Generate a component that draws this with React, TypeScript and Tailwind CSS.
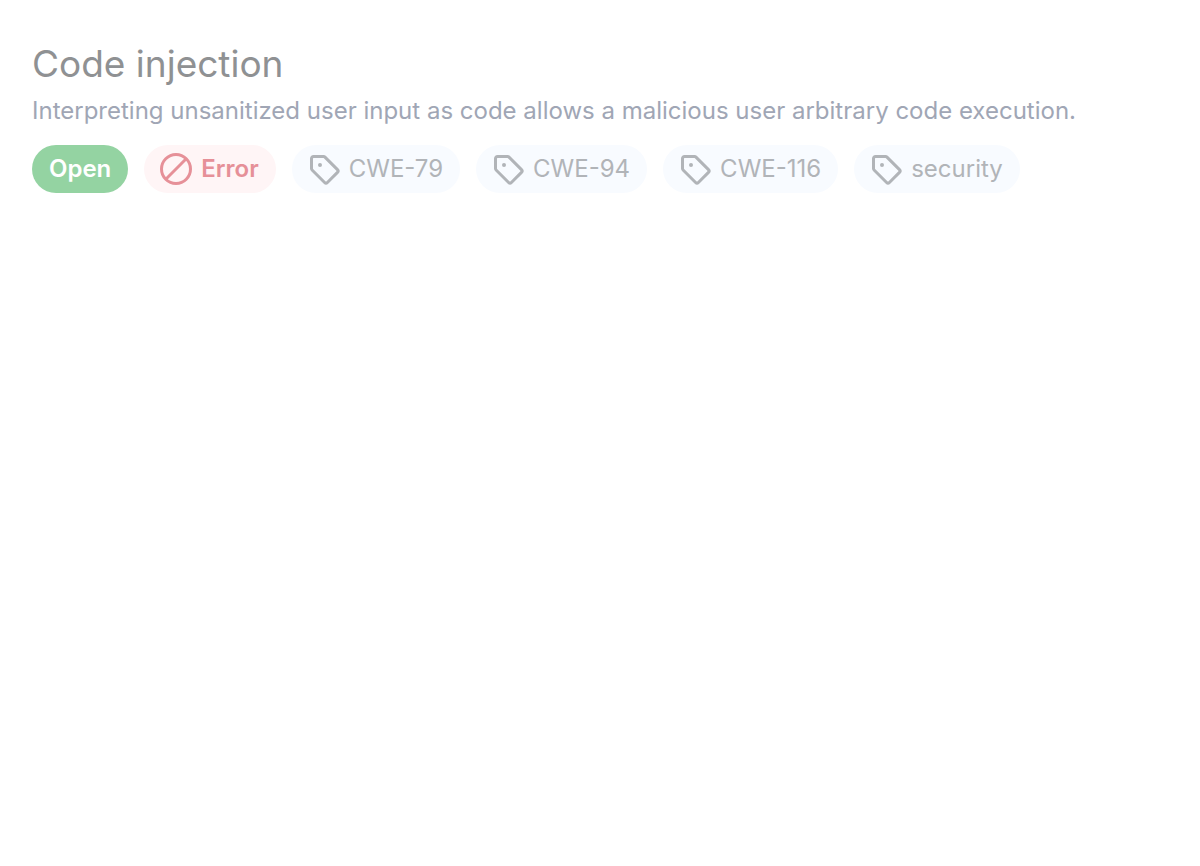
const tags = ["CWE-79", "CWE-94", "CWE-116", "security"];

function SlashIcon() {
  return (
    <svg viewBox="0 0 16 16" className="size-8 shrink-0" fill="none" stroke="currentColor" strokeWidth="1.5" aria-hidden="true">
      <circle cx="8" cy="8" r="7.25" />
      <path d="M2.9 13.1 13.1 2.9" />
    </svg>
  );
}

function TagIcon() {
  return (
    <svg viewBox="0 0 16 16" className="size-8 shrink-0" fill="currentColor" aria-hidden="true">
      <path d="M1 7.775V2.75C1 1.784 1.784 1 2.75 1h5.025c.464 0 .91.184 1.238.513l6.25 6.25a1.75 1.75 0 0 1 0 2.474l-5.026 5.026a1.75 1.75 0 0 1-2.474 0l-6.25-6.25A1.752 1.752 0 0 1 1 7.775Zm1.5 0c0 .066.026.13.073.177l6.25 6.25a.25.25 0 0 0 .354 0l5.025-5.025a.25.25 0 0 0 0-.354l-6.25-6.25a.25.25 0 0 0-.177-.073H2.75a.25.25 0 0 0-.25.25ZM6 5a1 1 0 1 1 0 2 1 1 0 0 1 0-2Z" />
    </svg>
  );
}

export default function App() {
  return (
    <main className="min-h-screen bg-white px-8 pt-10 font-['Inter',sans-serif]">
      <h1 className="text-[37px] leading-[48px] text-[#8f9193]">Code injection</h1>
      <p className="mt-[5px] text-2xl leading-9 text-[#a0a6b5]">
        Interpreting unsanitized user input as code allows a malicious user arbitrary code execution.
      </p>
      <ul className="mt-4 flex flex-wrap gap-4 text-2xl">
        <li className="flex h-12 items-center rounded-full bg-[#94d3a2] px-[17px] font-semibold text-white">Open</li>
        <li className="flex h-12 items-center gap-[9px] rounded-full bg-[#fff5f6] pr-[17px] pl-4 font-semibold text-[#e69098]">
          <SlashIcon />
          Error
        </li>
        {tags.map((tag) => (
          <li
            key={tag}
            className="flex h-12 items-center gap-[9px] rounded-full bg-[#f8fbff] pr-[17px] pl-4 text-[#b1b4b8]"
          >
            <TagIcon />
            {tag}
          </li>
        ))}
      </ul>
    </main>
  );
}
